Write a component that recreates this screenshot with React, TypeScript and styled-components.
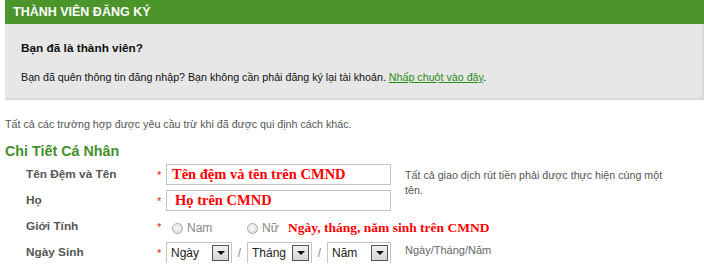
import React from 'react'
import styled, { createGlobalStyle } from 'styled-components'

const GlobalStyle = createGlobalStyle`
  body {
    margin: 0;
    background: #fff;
    font-family: Tahoma, "Liberation Sans", Arial, sans-serif;
    font-size: 10.7px;
    color: #222;
  }
`

const Page = styled.div`
  width: 704px;
  padding-left: 5px;
  box-sizing: border-box;
`

const Header = styled.div`
  height: 24px;
  background: #4a942a;
  color: #fff;
  font-weight: bold;
  font-size: 12.5px;
  line-height: 24px;
  padding-left: 8px;
`

const InfoPanel = styled.div`
  background: #e7e7e7;
  border-right: 2px solid #d9d9d9;
  border-bottom: 2px solid #d9d9d9;
  padding: 17px 16px 15px;
  height: 76px;
  box-sizing: border-box;
`

const PanelTitle = styled.div`
  font-weight: bold;
  font-size: 11.8px;
  color: #111;
  line-height: 14px;
`

const PanelText = styled.div`
  margin-top: 15px;
  line-height: 14px;
  color: #111;
`

const GreenLink = styled.a`
  color: #2c8a1a;
  text-decoration: underline;
`

const Intro = styled.div`
  margin-top: 17px;
  color: #555;
  line-height: 14px;
`

const SectionTitle = styled.div`
  margin-top: 11px;
  color: #45902a;
  font-size: 14.3px;
  font-weight: bold;
  line-height: 18px;
`

const Form = styled.div`
  display: grid;
  grid-template-columns: 131px 9px 225px auto;
  grid-auto-rows: 21px;
  row-gap: 5px;
  padding-left: 21px;
  margin-top: 4px;
  align-items: center;
`

const Label = styled.div`
  font-weight: bold;
  font-size: 11.8px;
  color: #555;
  height: 21px;
  line-height: 21px;
`

const Star = styled.div`
  color: #e02020;
  font-size: 11px;
  height: 21px;
  line-height: 23px;
`

const TextBox = styled.div<{ $pad: number }>`
  width: 225px;
  height: 21px;
  border: 1px solid #c4c4c4;
  box-sizing: border-box;
  font-family: "Liberation Serif", "Times New Roman", serif;
  font-weight: bold;
  font-size: 14.5px;
  color: #ff0000;
  line-height: 19px;
  padding-left: ${(p) => p.$pad}px;
`

const Help = styled.div`
  grid-row: span 2;
  color: #555;
  padding-left: 14px;
  line-height: 15px;
  width: 262px;
  align-self: start;
  margin-top: 4px;
`

const RadioRow = styled.div`
  display: flex;
  align-items: center;
  height: 21px;
  grid-column: 3 / 5;
  padding-left: 6px;
  margin-top: 3px;
`

const RadioOption = styled.label<{ $w: number }>`
  display: flex;
  align-items: center;
  color: #888;
  font-size: 12px;
  width: ${(p) => p.$w}px;
`

const RadioCircle = styled.span`
  width: 11px;
  height: 11px;
  border-radius: 50%;
  border: 1px solid #aaa;
  background: radial-gradient(circle at 40% 40%, #fafafa, #d6d6d6);
  margin-right: 4px;
  box-sizing: border-box;
`

const RedNote = styled.span`
  font-family: "Liberation Serif", "Times New Roman", serif;
  font-weight: bold;
  font-size: 13.5px;
  color: #ff0000;
`

const DateRow = styled.div`
  display: flex;
  align-items: center;
  height: 22px;
  margin-top: 1px;
`

const SelectBox = styled.div<{ $w: number }>`
  width: ${(p) => p.$w}px;
  height: 22px;
  border: 1px solid #c4c4c4;
  box-sizing: border-box;
  display: flex;
  align-items: center;
  justify-content: space-between;
  padding: 0 2px 0 4px;
  font-size: 12px;
  color: #222;
`

const ArrowButton = styled.span`
  width: 17px;
  height: 16px;
  border: 1px solid #555;
  box-sizing: border-box;
  background: linear-gradient(#f0f0f0, #d4d4d4);
  display: flex;
  align-items: center;
  justify-content: center;
  &::after {
    content: '';
    border-left: 4px solid transparent;
    border-right: 4px solid transparent;
    border-top: 4px solid #111;
  }
`

const Slash = styled.span`
  color: #888;
  font-size: 12px;
  width: 15px;
  text-align: center;
`

const DateHint = styled.div`
  color: #666;
  font-size: 11px;
  padding-left: 14px;
  align-self: start;
  margin-top: 2px;
`

const Select: React.FC<{ label: string, width: number }> = ({ label, width }) => (
  <SelectBox $w={width}>
    <span>{label}</span>
    <ArrowButton />
  </SelectBox>
)

export default function App() {
  return (
    <Page>
      <GlobalStyle />
      <Header>THÀNH VIÊN ĐĂNG KÝ</Header>
      <InfoPanel>
        <PanelTitle>Bạn đã là thành viên?</PanelTitle>
        <PanelText>
          Bạn đã quên thông tin đăng nhập? Bạn không cần phải đăng ký lại tài khoản.{' '}
          <GreenLink href="#">Nhấp chuột vào đây</GreenLink>.
        </PanelText>
      </InfoPanel>
      <Intro>Tất cả các trường hợp được yêu cầu trừ khi đã được qui định cách khác.</Intro>
      <SectionTitle>Chi Tiết Cá Nhân</SectionTitle>
      <Form>
        <Label>Tên Đệm và Tên</Label>
        <Star>*</Star>
        <TextBox $pad={5}>Tên đệm và tên trên CMND</TextBox>
        <Help>Tất cả giao dịch rút tiền phải được thực hiện cùng một tên.</Help>

        <Label>Họ</Label>
        <Star>*</Star>
        <TextBox $pad={8}>Họ trên CMND</TextBox>

        <Label>Giới Tính</Label>
        <Star>*</Star>
        <RadioRow>
          <RadioOption $w={75}><RadioCircle />Nam</RadioOption>
          <RadioOption $w={41}><RadioCircle />Nữ</RadioOption>
          <RedNote>Ngày, tháng, năm sinh trên CMND</RedNote>
        </RadioRow>

        <Label>Ngày Sinh</Label>
        <Star>*</Star>
        <DateRow>
          <Select label="Ngày" width={66} />
          <Slash>/</Slash>
          <Select label="Tháng" width={65} />
          <Slash>/</Slash>
          <Select label="Năm" width={64} />
        </DateRow>
        <DateHint>Ngày/Tháng/Năm</DateHint>
      </Form>
    </Page>
  )
}
